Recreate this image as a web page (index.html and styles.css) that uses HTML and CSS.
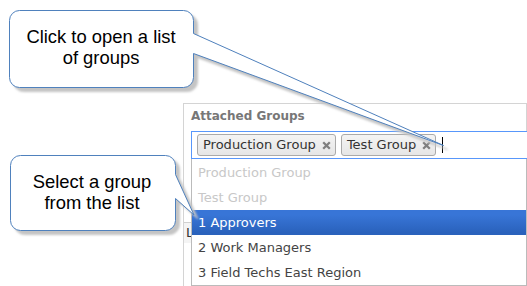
FILE: index.html
```html
<!DOCTYPE html>
<html lang="en">
<head>
    <meta charset="UTF-8">
    <title>Attached Groups</title>
    <link rel="stylesheet" href="styles.css">
</head>
<body>
<div class="panel">
    <div class="field-label">Attached Groups</div>

    <!-- Multi-select box with its open list -->
    <div class="chosen">
        <div class="choices">
            <span class="tag">Production Group
                <svg class="tag-close" width="9" height="9" viewBox="0 0 9 9"><path d="M1.2 1.2L7.8 7.8M7.8 1.2L1.2 7.8"/></svg>
            </span>
            <span class="tag">Test Group
                <svg class="tag-close" width="9" height="9" viewBox="0 0 9 9"><path d="M1.2 1.2L7.8 7.8M7.8 1.2L1.2 7.8"/></svg>
            </span>
            <span class="caret"></span>
        </div>
        <ul class="drop">
            <li class="used">Production Group</li>
            <li class="used">Test Group</li>
            <li class="active">1 Approvers</li>
            <li>2 Work Managers</li>
            <li>3 Field Techs East Region</li>
        </ul>
    </div>

    <div class="next-row">L</div>
</div>

<!-- Annotation callouts drawn over the screenshot -->
<svg class="callouts" width="527" height="286" viewBox="0 0 527 286">
    <defs>
        <filter id="soft" x="-5%" y="-5%" width="110%" height="110%">
            <feGaussianBlur stdDeviation="0.8"/>
        </filter>
    </defs>
    <g class="shadow" transform="translate(4 4)" filter="url(#soft)">
        <path d="M19.5 10.5H183.5A10 10 0 0 1 193.5 20.5V33.5L443.5 145.5L193.5 53.5V77.5A10 10 0 0 1 183.5 87.5H19.5A10 10 0 0 1 9.5 77.5V20.5A10 10 0 0 1 19.5 10.5Z"/>
        <path d="M20.5 155.5H165.5A10 10 0 0 1 175.5 165.5V174.5L194 215L175.5 198.5V220.5A10 10 0 0 1 165.5 230.5H20.5A10 10 0 0 1 10.5 220.5V165.5A10 10 0 0 1 20.5 155.5Z"/>
    </g>
    <g class="bubble">
        <path d="M19.5 10.5H183.5A10 10 0 0 1 193.5 20.5V33.5L443.5 145.5L193.5 53.5V77.5A10 10 0 0 1 183.5 87.5H19.5A10 10 0 0 1 9.5 77.5V20.5A10 10 0 0 1 19.5 10.5Z"/>
        <path d="M20.5 155.5H165.5A10 10 0 0 1 175.5 165.5V174.5L194 215L175.5 198.5V220.5A10 10 0 0 1 165.5 230.5H20.5A10 10 0 0 1 10.5 220.5V165.5A10 10 0 0 1 20.5 155.5Z"/>
    </g>
    <text class="callout-text" x="101" y="43">Click to open a list</text>
    <text class="callout-text" x="101" y="64">of groups</text>
    <text class="callout-text" x="92" y="188">Select a group</text>
    <text class="callout-text" x="92" y="209">from the list</text>
</svg>
</body>
</html>
```

FILE: styles.css
```css
body {
    margin: 0;
    width: 527px;
    height: 286px;
    overflow: hidden;
    position: relative;
    background-color: #fff;
    font-family: 'DejaVu Sans', Verdana, sans-serif;
    font-size: 13px;
    color: #444;
}

.panel {
    margin: 103px 0 0 183px;
    width: 328px;
    height: 178px;
    padding: 4px 7px 0;
    border: 1px solid #d4d4d4;
    border-bottom: none;
}

.field-label {
    font-weight: bold;
    font-size: 12px;
    line-height: 16px;
    color: #777;
}

.chosen {
    position: relative;
    margin-top: 7px;
}

.choices {
    display: flex;
    align-items: center;
    gap: 5px;
    width: 330px;
    height: 26px;
    padding: 0 5px;
    border: 1px solid #5897fb;
    border-right: none;
    box-sizing: content-box;
    background-color: #fff;
}

.tag {
    display: flex;
    align-items: center;
    gap: 6px;
    height: 20px;
    padding: 0 4px 0 5px;
    border: 1px solid #aaa;
    border-radius: 3px;
    background: linear-gradient(#f4f4f4, #e6e6e6);
    color: #333;
    line-height: 20px;
    white-space: nowrap;
}

.tag-close path {
    stroke: #7f7f7f;
    stroke-width: 2.3;
    fill: none;
}

.caret {
    width: 1px;
    height: 16px;
    margin-left: 1px;
    background-color: #000;
}

.drop {
    position: absolute;
    top: 28px;
    left: 0;
    width: 334px;
    margin: 0;
    padding: 1px 0 0;
    list-style: none;
    border: 1px solid #bbb;
    border-top: none;
    background-color: #fff;
    z-index: 2;
}

.drop li {
    height: 25px;
    line-height: 25px;
    padding-left: 6px;
    white-space: nowrap;
}

.drop .used {
    color: #c8c8c8;
}

.drop .active {
    color: #fff;
    background: linear-gradient(#3875d7 20%, #2a62bc 90%);
}

.next-row {
    width: 8px;
    margin: 63px -7px 0;
    padding-left: 2px;
    border-top: 1px solid #d0d0d0;
    background-color: #f4f4f4;
    line-height: 20px;
    color: #333;
}

.callouts {
    position: absolute;
    top: 0;
    left: 0;
    z-index: 5;
    pointer-events: none;
}

.shadow path {
    fill: #c4c4c4;
    stroke: #c4c4c4;
}

.bubble path {
    fill: #fff;
    stroke: #4f81bd;
    stroke-width: 1;
}

.callout-text {
    font-family: 'Liberation Sans', Arial, sans-serif;
    font-size: 18.4px;
    fill: #000;
    text-anchor: middle;
}
```
